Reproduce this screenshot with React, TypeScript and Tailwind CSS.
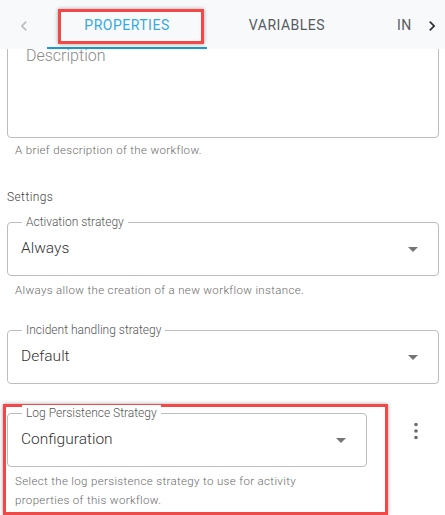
const font = "font-['Roboto','Liberation_Sans',sans-serif]"

function ArrowDown() {
  return (
    <svg width="24" height="24" viewBox="0 0 24 24" className="shrink-0">
      <path d="M7 10l5 5 5-5z" fill="#757575" />
    </svg>
  )
}

function SelectField({ label, value }: { label: string; value: string }) {
  return (
    <div className="relative flex h-[54px] items-center rounded-[4px] border border-[#bdbdbd] pl-[13px] pr-[13px]">
      <span className="absolute -top-[9px] left-[14px] bg-white px-[4px] text-[12px] font-light leading-[16px] text-[#555]">
        {label}
      </span>
      <span className="flex-1 text-[15.5px] font-light text-[#333]">{value}</span>
      <ArrowDown />
    </div>
  )
}

function Helper({ children, className = "mt-[3px]" }: { children: React.ReactNode; className?: string }) {
  return (
    <p className={`pl-[8px] text-[11.5px] font-light leading-[19px] tracking-[0.35px] text-[#6b6b6b] ${className}`}>
      {children}
    </p>
  )
}

export default function App() {
  return (
    <div className={`flex h-[515px] w-[445px] flex-col overflow-hidden bg-white ${font}`}>
      {/* Tabs */}
      <div className="relative z-10 flex h-[49px] shrink-0 bg-[#f8f9fa]">
        <button className="flex w-[47px] items-center justify-center pt-[3px]">
          <svg width="20" height="20" viewBox="0 0 24 24">
            <path d="M15.41 7.41L14 6l-6 6 6 6 1.41-1.41L10.83 12z" fill="#bdbdbd" />
          </svg>
        </button>
        <div className="flex flex-1 overflow-hidden">
          <div className="relative flex w-[160px] shrink-0 items-center justify-center border-b-2 border-[#1c96d6] pt-[4px] text-[14px] tracking-[0.5px] text-[#35a9e6]">
            PROPERTIES
            <div className="absolute left-[11px] top-[9px] h-[35px] w-[146px] border-[3px] border-[#f24848] shadow-[0_0_4px_rgba(0,0,0,0.35)]" />
          </div>
          <div className="flex w-[160px] shrink-0 items-center justify-center pt-[2px] text-[14px] tracking-[0.5px] text-[#555b63]">
            VARIABLES
          </div>
          <div className="flex w-[160px] shrink-0 items-center pl-[30px] pt-[2px] text-[14px] tracking-[0.5px] text-[#555b63]">
            INPUT/OUTPUT
          </div>
        </div>
        <button className="flex w-[34px] items-center justify-center pl-[8px] pt-[3px]">
          <svg width="20" height="20" viewBox="0 0 24 24">
            <path d="M8.59 16.59L10 18l6-6-6-6-1.41 1.41L13.17 12z" fill="#2b2f36" />
          </svg>
        </button>
      </div>

      {/* Content */}
      <div className="flex-1 overflow-hidden">
        <div className="-mt-[29px] px-[7px] pr-[6px]">
          <div className="h-[118px] rounded-[4px] border border-[#bdbdbd] pl-[18px] pt-[23px] text-[16px] font-light text-[#8a8a8a]">
            Description
          </div>
          <Helper>A brief description of the workflow.</Helper>

          <div className="mt-[27px] text-[12px] font-light leading-[20px] tracking-[0.4px] text-[#444]">Settings</div>

          <div className="mt-[15px]">
            <SelectField label="Activation strategy" value="Always" />
            <Helper className="mt-[5px]">Always allow the creation of a new workflow instance.</Helper>
          </div>

          <div className="mt-[30px]">
            <SelectField label="Incident handling strategy" value="Default" />
          </div>

          <div className="-ml-[4px] mt-[20px] flex items-start">
            <div className="w-[385px] shrink-0 border-[3px] border-[#f24848] pb-[2px] pl-[1px] pr-[18px] pt-[6px] shadow-[0_0_4px_rgba(0,0,0,0.35)]">
              <SelectField label="Log Persistence Strategy" value="Configuration" />
              <Helper className="mt-[5px] w-[320px]">
                Select the log persistence strategy to use for activity properties of this workflow.
              </Helper>
            </div>
            <button className="ml-[16px] mt-[15px] flex w-[24px] justify-center">
              <svg width="24" height="24" viewBox="0 0 24 24">
                <circle cx="12" cy="5.5" r="1.8" fill="#6b6b6b" />
                <circle cx="12" cy="12" r="1.8" fill="#6b6b6b" />
                <circle cx="12" cy="18.5" r="1.8" fill="#6b6b6b" />
              </svg>
            </button>
          </div>
        </div>
      </div>
    </div>
  )
}
